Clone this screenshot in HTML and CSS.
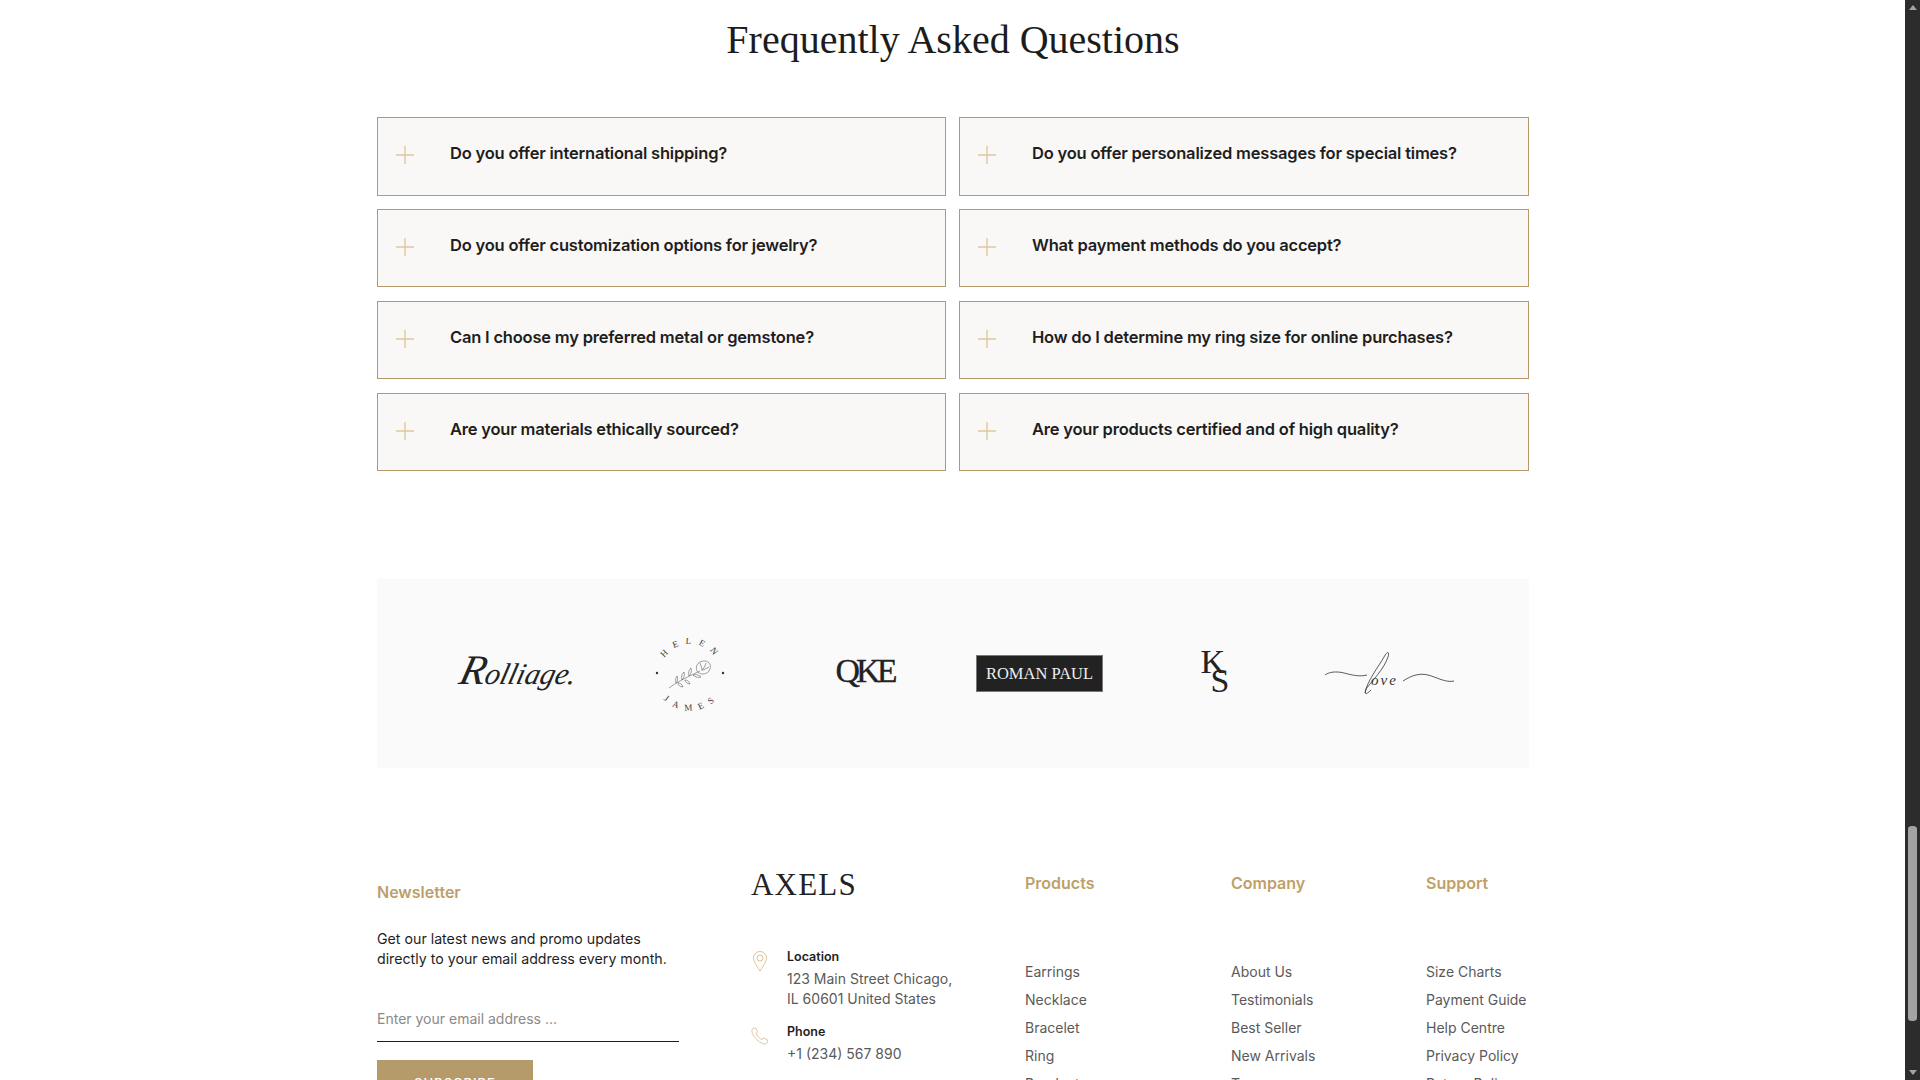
FILE: index.html
```html
<!DOCTYPE html>
<html lang="en">
<head>
<meta charset="utf-8">
<title>Axels – FAQ</title>
<link rel="stylesheet" href="styles.css">
</head>
<body>
<div class="viewport">
  <main class="page">
    <h1 class="faq-title">Frequently Asked Questions</h1>
    <section class="faq-grid">
      <div class="faq-item"><svg class="plus" viewBox="0 0 18 18"><path d="M0 9H18M9 0V18"/></svg><span>Do you offer international shipping?</span></div>
      <div class="faq-item"><svg class="plus" viewBox="0 0 18 18"><path d="M0 9H18M9 0V18"/></svg><span>Do you offer personalized messages for special times?</span></div>
      <div class="faq-item"><svg class="plus" viewBox="0 0 18 18"><path d="M0 9H18M9 0V18"/></svg><span>Do you offer customization options for jewelry?</span></div>
      <div class="faq-item"><svg class="plus" viewBox="0 0 18 18"><path d="M0 9H18M9 0V18"/></svg><span>What payment methods do you accept?</span></div>
      <div class="faq-item"><svg class="plus" viewBox="0 0 18 18"><path d="M0 9H18M9 0V18"/></svg><span>Can I choose my preferred metal or gemstone?</span></div>
      <div class="faq-item"><svg class="plus" viewBox="0 0 18 18"><path d="M0 9H18M9 0V18"/></svg><span>How do I determine my ring size for online purchases?</span></div>
      <div class="faq-item"><svg class="plus" viewBox="0 0 18 18"><path d="M0 9H18M9 0V18"/></svg><span>Are your materials ethically sourced?</span></div>
      <div class="faq-item"><svg class="plus" viewBox="0 0 18 18"><path d="M0 9H18M9 0V18"/></svg><span>Are your products certified and of high quality?</span></div>
    </section>

    <section class="brands">
      <div class="brand"><span class="rolliage"><span class="rolliage-r">R</span>olliage.</span></div>
      <div class="brand">
        <svg class="helen" viewBox="0 0 80 80">
          <defs>
            <path id="arcTop" d="M10 40A30 30 0 0 1 70 40"/>
            <path id="arcBot" d="M3.500 40A36.500 36.500 0 0 0 76.500 40"/>
          </defs>
          <text class="helen-text"><textPath href="#arcTop" startOffset="52%" text-anchor="middle">HELEN</textPath></text>
          <text class="helen-text"><textPath href="#arcBot" startOffset="52%" text-anchor="middle">JAMES</textPath></text>
          <circle cx="7" cy="39" r="1.200" fill="#333"/>
          <circle cx="73" cy="39" r="1.200" fill="#333"/>
          <g fill="none" stroke="#444" stroke-width=".5">
            <path d="M19 54C28 47 38 43 50 37"/>
            <path d="M47 31c2-4 8-5 11-3 3 2 3 6 1 9-2 3-7 4-10 2-3-2-3-5-2-8z"/>
            <path d="M50 29c1 3 2 5 2 8M56 29c-1 3-2 5-4 7M59 33c-2 1-4 2-6 3"/>
            <path d="M26 49c-1-3 0-6 1-7 1 2 1 5-1 7zM32 46c-1-4 0-6 2-8 1 3 0 6-2 8zM39 42c-1-4 0-6 2-8 1 3 0 6-2 8z"/>
            <path d="M28 49c2 0 4 1 5 4-3 0-5-2-5-4zM35 46c2 0 4 1 5 4-2 0-5-2-5-4zM43 41c3-1 6 0 8 2-3 1-6 0-8-2z"/>
          </g>
        </svg>
      </div>
      <div class="brand"><span class="qke">QKE</span></div>
      <div class="brand"><span class="roman">ROMAN PAUL</span></div>
      <div class="brand"><span class="ks"><span>K</span><span class="ks-s">S</span></span></div>
      <div class="brand">
        <svg class="love" viewBox="0 0 132 46">
          <g fill="none" stroke="#333" stroke-width=".8">
            <path d="M1 24C5 21 12 20 20 22S35 26 43 24"/>
            <path d="M41 42C43 30 55 15 60 6 63 0 66 0 64 6 60 18 48 30 42 38 40 44 42 44 47 39"/>
            <path d="M79 30C88 24 96 22 104 24S122 32 130 30"/>
          </g>
          <text class="love-text" x="47" y="34">ove</text>
        </svg>
      </div>
    </section>

    <footer class="footer">
      <div class="col-news">
        <h3 class="news-title">Newsletter</h3>
        <p class="news-copy">Get our latest news and promo updates directly to your email address every month.</p>
        <div class="news-input">Enter your email address ...</div>
        <button class="news-btn">SUBSCRIBE</button>
      </div>
      <div class="col-brand">
        <div class="axels">AXELS</div>
        <div class="contact">
          <svg class="contact-icon" viewBox="0 0 18 22"><g fill="none" stroke="#dcc195" stroke-width="1"><path d="M9 21C5 15 2.500 11 2.500 8a6.500 6.500 0 0 1 13 0C15.500 11 13 15 9 21z"/><circle cx="9" cy="8" r="3"/></g></svg>
          <div>
            <div class="contact-label">Location</div>
            <div class="contact-value">123 Main Street Chicago,<br>IL 60601 United States</div>
          </div>
        </div>
        <div class="contact contact-phone">
          <svg class="contact-icon" viewBox="0 0 20 20"><path fill="none" stroke="#dcc195" stroke-width="1" d="M2 1.500 5 1l2.500 4.500-2 1.500c1 3 4 6 7 7l1.500-2 4.500 2.500-.5 3c-1 1.500-3 1.500-5 .8C8 16.500 3.500 12 1.500 7 .8 5 .8 3 2 1.500z"/></svg>
          <div>
            <div class="contact-label">Phone</div>
            <div class="contact-value">+1 (234) 567 890</div>
          </div>
        </div>
      </div>
      <nav class="col-links col-products">
        <h3 class="links-title">Products</h3>
        <ul class="links"><li>Earrings</li><li>Necklace</li><li>Bracelet</li><li>Ring</li><li>Pendant</li></ul>
      </nav>
      <nav class="col-links col-company">
        <h3 class="links-title">Company</h3>
        <ul class="links"><li>About Us</li><li>Testimonials</li><li>Best Seller</li><li>New Arrivals</li><li>Terms</li></ul>
      </nav>
      <nav class="col-links col-support">
        <h3 class="links-title">Support</h3>
        <ul class="links"><li>Size Charts</li><li>Payment Guide</li><li>Help Centre</li><li>Privacy Policy</li><li>Return Policy</li></ul>
      </nav>
    </footer>
  </main>
  <aside class="scrollbar">
    <span class="arrow arrow-up"></span>
    <div class="track"><div class="thumb"></div></div>
    <span class="arrow arrow-down"></span>
  </aside>
</div>
</body>
</html>
```
FILE: styles.css
```css
* { box-sizing: border-box; }
html, body { margin: 0; height: 100%; overflow: hidden; background: #fff; }
body { font-family: Inter, "Noto Sans", sans-serif; color: #1e1e1e; }
.viewport { display: flex; height: 1080px; overflow: hidden; }
.page { width: 1905px; flex: none; padding: 0 376px 0 377px; overflow: hidden; height: 1080px; }

.faq-title {
  margin: 0; padding-top: 13px; height: 117.45px; text-align: center;
  font-family: "Liberation Serif", serif; font-weight: 400; font-size: 40px; line-height: 54px; color: #1c1c1c;
}
.faq-grid { display: grid; grid-template-columns: 569px 570px; column-gap: 13px; row-gap: 13.75px; }
.faq-item {
  height: 78.1px; border: 1px solid #b59a6a; background: #faf8f6;
  display: flex; align-items: flex-start; padding: 22px 18px 0;
  font-size: 16.5px; font-weight: 600; line-height: 26px; letter-spacing: -.2px; color: #1e1e1e;
}
.plus { width: 18px; height: 18px; margin-top: 6px; margin-right: 36px; flex: none; }
.plus path { fill: none; stroke: #dfc89e; stroke-width: 1.4; }

.brands {
  margin-top: 108px; height: 189px; background: #fafafa;
  display: grid; grid-template-columns: repeat(6, 175px); padding: 0 12px 0 50px; align-items: center; justify-items: center;
}
.brand { display: flex; align-items: center; justify-content: center; }
.rolliage { font-family: "Liberation Serif", serif; font-style: italic; font-size: 30px; color: #222; transform: skewX(-14deg); padding: 0 0 8px 7px; }
.rolliage-r { font-size: 42px; }
.helen { width: 80px; height: 80px; }
.helen-text { font-family: "Liberation Serif", serif; font-size: 9px; letter-spacing: 7px; fill: #333; }
.qke { font-family: "Liberation Serif", serif; font-size: 34px; letter-spacing: -4px; color: #222; padding-bottom: 5px; -webkit-text-stroke: .3px #222; }
.roman { background: #222; color: #eee; font-family: "Liberation Serif", serif; font-size: 16.5px; width: 127px; height: 37px; display: flex; align-items: center; justify-content: center; border: 1px solid #777; }
.ks { display: flex; flex-direction: column; width: 30px; font-family: "Liberation Serif", serif; font-size: 34px; line-height: 19px; padding: 5px 0 10px 1px; color: #222; }
.ks-s { padding-left: 10px; }
.love { width: 132px; height: 46px; }
.love-text { font-family: "Liberation Serif", serif; font-style: italic; font-size: 15px; letter-spacing: 2px; fill: #333; }

.footer { margin-top: 104px; display: flex; align-items: flex-start; }
.col-news { width: 374px; flex: none; padding-top: 10px; }
.news-title { margin: 0; font-size: 16px; font-weight: 600; line-height: 20px; color: #bd9f6b; }
.news-copy { margin: 27px 0 0; width: 300px; font-size: 14.2px; line-height: 20px; color: #1e1e1e; }
.news-input { margin-top: 40px; width: 302px; height: 33px; border-bottom: 1px solid #1e1e1e; font-size: 14px; line-height: 20px; color: #8a8a8a; }
.news-btn { display: block; margin-top: 18px; width: 156px; height: 46px; border: 0; background: #b59a6a; color: #fff; font: 500 13px Inter, sans-serif; letter-spacing: 1px; }

.col-brand { width: 274px; flex: none; }
.axels { font-family: "Liberation Serif", serif; font-size: 31px; letter-spacing: 1.2px; line-height: 26px; color: #222; }
.contact { display: flex; margin-top: 50px; }
.contact-phone { margin-top: 14px; }
.contact-icon { width: 18px; height: 22px; margin-right: 18px; margin-top: 2px; flex: none; }
.contact-label { font-size: 12.5px; font-weight: 600; line-height: 18px; color: #1e1e1e; }
.contact-value { font-size: 14px; line-height: 20px; color: #5a5a5a; margin-top: 3px; }

.col-links { flex: none; }
.col-products { width: 206px; }
.col-company { width: 195px; }
.links-title { margin: 0; font-size: 16px; font-weight: 600; line-height: 20px; color: #c09f68; padding-top: 1px; }
.links { list-style: none; margin: 69px 0 0; padding: 0; display: flex; flex-direction: column; row-gap: 8px; font-size: 14px; line-height: 20px; color: #5a5a5a; }

.scrollbar { width: 15px; flex: none; height: 1080px; background: #2c2c2c; display: flex; flex-direction: column; align-items: center; }
.arrow { flex: none; width: 0; height: 0; margin: 5px 0; border-left: 4.5px solid transparent; border-right: 4.5px solid transparent; }
.arrow-up { border-bottom: 5px solid #a3a3a3; }
.arrow-down { border-top: 5px solid #a3a3a3; }
.track { flex: 1; width: 9px; display: flex; flex-direction: column; justify-content: flex-end; padding-bottom: 44px; }
.thumb { height: 195px; background: #a3a3a3; border-radius: 4px / 3px; }
```
